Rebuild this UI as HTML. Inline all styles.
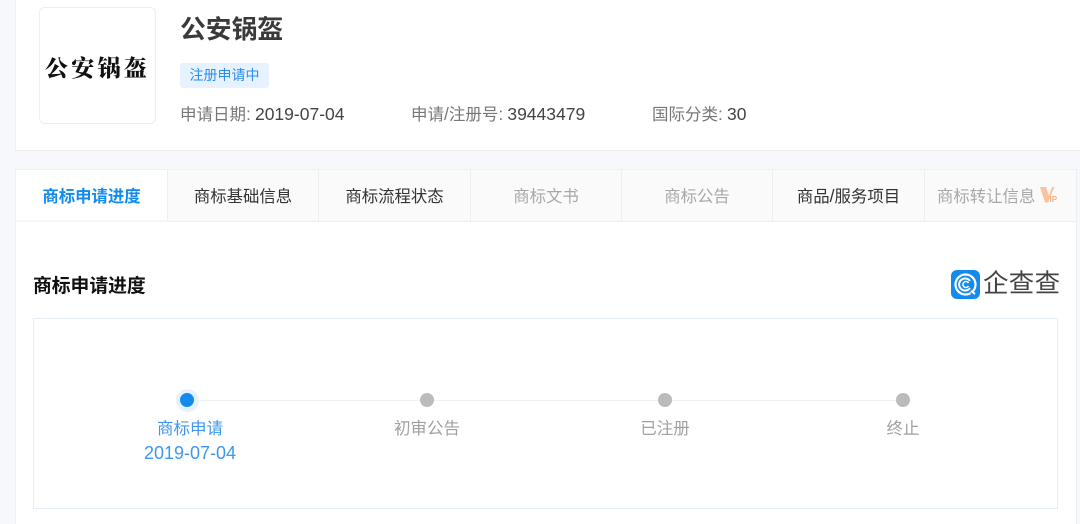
<!DOCTYPE html>
<html lang="zh"><head><meta charset="utf-8"><style>
html,body{margin:0;padding:0}
body{width:1080px;height:524px;background:#f6f8fb;position:relative;overflow:hidden;font-family:"Liberation Sans","Noto Sans CJK SC",sans-serif;color:#333}
div,span{position:absolute;white-space:nowrap;box-sizing:border-box}
i{font-style:normal;font-size:17.5px;line-height:0}
.tab{top:169px;height:53px;line-height:54px;text-align:center;font-size:16.4px;background:#fafafa;border-right:1px solid #eee;border-bottom:1px solid #eee;border-top:1px solid #f0f0f0}
.g{color:#a8a8a8}
.d{width:14px;height:14px;border-radius:50%;background:#bbb;top:393px}
.l{top:418px;font-size:16.5px;line-height:22px;color:#a0a0a0;text-align:center;width:120px}
.m{top:104px;font-size:16.5px;line-height:22px;color:#444;word-spacing:-.5px}.m b{font-weight:400;color:#777}
</style></head><body>
<div style="left:15px;top:0;width:1065px;height:151px;background:#fff;border-bottom:1px solid #eee;border-left:1px solid #f0f0f0"></div>
<div style="left:39px;top:7px;width:117px;height:117px;border:1px solid #eee;border-radius:6px;background:#fff"></div>
<div style="left:45px;top:50px;width:105px;font-family:'Noto Serif CJK SC','Liberation Serif',serif;font-weight:900;font-size:23px;line-height:34px;color:#111;letter-spacing:3.300px">公安锅盔</div>
<div style="left:180px;top:14px;font-size:25.800px;line-height:32px;font-weight:700;color:#3a3a3a">公安锅盔</div>
<div style="left:180px;top:63px;width:89px;height:25px;background:#e6f2ff;border-radius:3px;color:#2b8ff0;font-size:14px;line-height:25px;text-align:center">注册申请中</div>
<div class="m" style="left:180px"><b>申请日期<i>:</i></b> <i>2019-07-04</i></div>
<div class="m" style="left:411px"><b>申请<i>/</i>注册号<i>:</i></b> <i>39443479</i></div>
<div class="m" style="left:652px"><b>国际分类<i>:</i></b> <i>30</i></div>

<div style="left:15px;top:169px;width:1062px;height:355px;background:#fff;border-left:1px solid #f0f0f0;border-right:1px solid #f0f0f0"></div>
<div class="tab" style="left:15px;width:153px;background:#fff;color:#128bed;font-weight:700;border-bottom:2px solid #f6f6f6;border-left:1px solid #f0f0f0">商标申请进度</div>
<div class="tab" style="left:168px;width:151px">商标基础信息</div>
<div class="tab" style="left:319px;width:152px">商标流程状态</div>
<div class="tab g" style="left:471px;width:151px">商标文书</div>
<div class="tab g" style="left:622px;width:151px">商标公告</div>
<div class="tab" style="left:773px;width:152px">商品<i>/</i>服务项目</div>
<div class="tab g" style="left:925px;width:152px;text-align:left;padding-left:12px">商标转让信息</div>
<svg style="position:absolute;left:1040px;top:186px" width="19" height="18" viewBox="0 0 19 18"><path d="M0 1h6l3 9 3-9h2.500L8 16.500H5z" fill="#fdc39a"/><text x="9.500" y="16" font-size="8" font-weight="700" fill="#fbb183" font-family="Liberation Sans">IP</text></svg>

<div style="left:33px;top:273px;font-size:18.800px;line-height:25px;font-weight:700;color:#111">商标申请进度</div>
<svg style="position:absolute;left:951px;top:270px" width="29" height="29" viewBox="0 0 29 29"><rect width="29" height="29" rx="6" fill="#128bed"/><circle cx="14.500" cy="14.500" r="10" fill="none" stroke="#fff" stroke-width="2.200"/><path d="M19 11a6 6 0 1 0 0 7" fill="none" stroke="#fff" stroke-width="2"/><path d="M17.500 13a3 3 0 1 0 0 3" fill="none" stroke="#fff" stroke-width="1.500"/><path d="M20 22l5 3" stroke="#128bed" stroke-width="3"/><path d="M20 21l4 3" stroke="#fff" stroke-width="2"/></svg>
<div style="left:983px;top:268px;font-size:25.500px;line-height:32px;color:#444;letter-spacing:.3px">企查查</div>

<div style="left:33px;top:318px;width:1025px;height:191px;border:1px solid #e6eef6;background:#fff"></div>
<div style="left:187px;top:400px;width:716px;height:1px;background:#edf0f4"></div>
<div style="left:176px;top:389px;width:23px;height:23px;border-radius:50%;background:#e6f2ff"></div>
<div class="d" style="left:180px;background:#128bed"></div>
<div class="d" style="left:420px"></div>
<div class="d" style="left:658px"></div>
<div class="d" style="left:896px"></div>
<div class="l" style="left:130px;color:#3f97ef">商标申请<br><span style="position:static;line-height:26px;font-size:18px">2019-07-04</span></div>
<div class="l" style="left:367px">初审公告</div>
<div class="l" style="left:605px">已注册</div>
<div class="l" style="left:843px">终止</div>
</body></html>
